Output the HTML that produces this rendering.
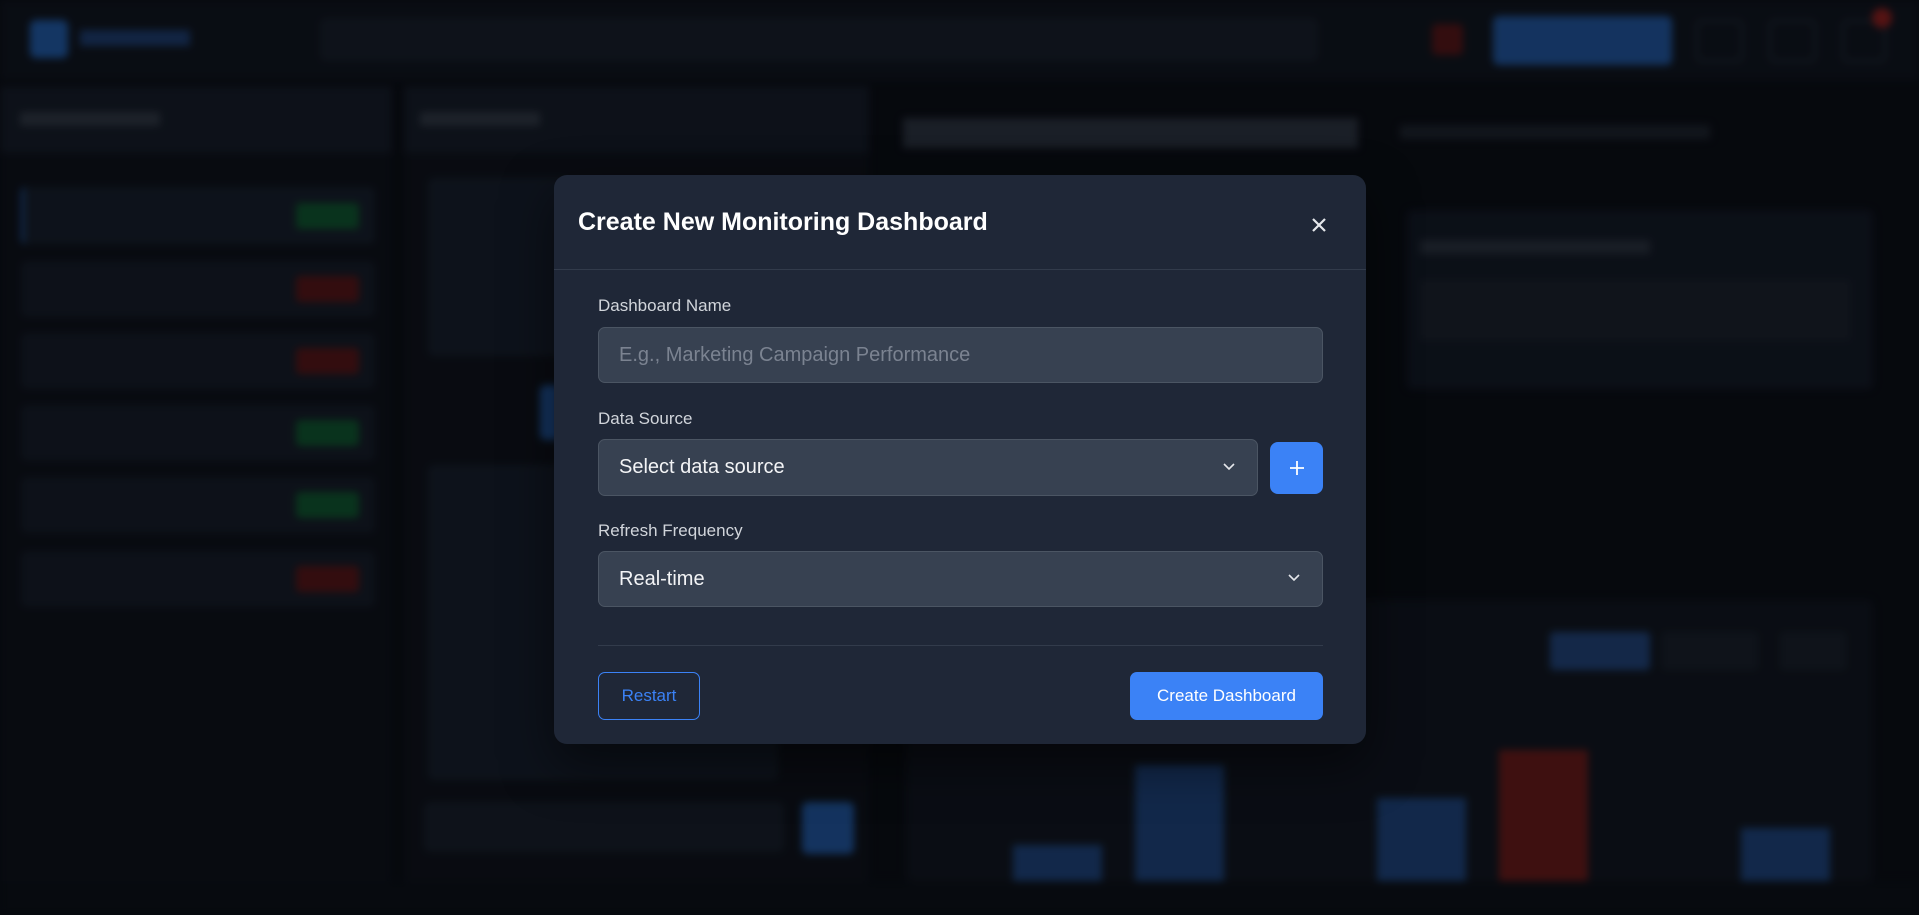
<!DOCTYPE html>
<html><head><meta charset="utf-8"><style>
*{box-sizing:border-box;margin:0;padding:0}
body{width:1919px;height:915px;overflow:hidden;background:#0a0d14;font-family:"Liberation Sans",sans-serif;position:relative}
.bg{position:absolute;inset:0;filter:blur(4px)}
.ov{position:absolute;inset:0;background:rgba(0,0,0,.3)}
.a{position:absolute}
.modal{position:absolute;left:554px;top:175px;width:812px;height:569px;background:#1f2737;border-radius:13px;box-shadow:0 20px 50px rgba(0,0,0,.5)}
.lbl{position:absolute;left:44px;color:#d1d5db;font-size:17px}
.field{position:absolute;left:44px;background:#374151;border:1px solid #4b5563;border-radius:7px;color:#f3f4f6;font-size:20px;padding-left:20px;display:flex;align-items:center}
.chev{position:absolute;top:50%;margin-top:-5px;width:12px;height:8px}
</style></head><body>
<div class="bg">
 <div class="a" style="left:0;top:0;width:1919px;height:80px;background:#0e131c"></div>
 <div class="a" style="left:30px;top:20px;width:38px;height:38px;background:#1d4e8f;border-radius:6px"></div>
 <div class="a" style="left:80px;top:30px;width:110px;height:16px;background:#1a3560"></div>
 <div class="a" style="left:320px;top:18px;width:998px;height:43px;background:#151b26;border-radius:6px"></div>
 <div class="a" style="left:1432px;top:24px;width:31px;height:31px;background:#4a1416;border-radius:5px"></div>
 <div class="a" style="left:1493px;top:16px;width:179px;height:49px;background:#1d4a88;border-radius:6px"></div>
 <div class="a" style="left:1696px;top:20px;width:47px;height:42px;border:2px solid #222a36;border-radius:6px"></div>
 <div class="a" style="left:1769px;top:20px;width:47px;height:42px;border:2px solid #222a36;border-radius:6px"></div>
 <div class="a" style="left:1842px;top:20px;width:44px;height:42px;border:2px solid #222a36;border-radius:6px"></div>
 <div class="a" style="left:1872px;top:8px;width:20px;height:20px;background:#7a1c1c;border-radius:50%"></div>
 <div class="a" style="left:0;top:86px;width:392px;height:67px;background:#131924"></div>
 <div class="a" style="left:20px;top:112px;width:140px;height:14px;background:#2a313c"></div>
 <div class="a" style="left:404px;top:86px;width:465px;height:67px;background:#131924"></div>
 <div class="a" style="left:420px;top:112px;width:120px;height:14px;background:#2a313c"></div>
 <div class="a" style="left:0;top:153px;width:392px;height:728px;background:#0c1018"></div>
 <div class="a" style="left:404px;top:153px;width:465px;height:728px;background:#0d1119"></div>
 <div class="a" style="left:21px;top:187px;width:354px;height:57px;background:#141b27;border-left:3px solid #1d4a88;border-radius:5px"></div>
 <div class="a" style="left:21px;top:261px;width:354px;height:56px;background:#131924;border-radius:5px"></div>
 <div class="a" style="left:21px;top:333px;width:354px;height:56px;background:#131924;border-radius:5px"></div>
 <div class="a" style="left:21px;top:405px;width:354px;height:56px;background:#131924;border-radius:5px"></div>
 <div class="a" style="left:21px;top:477px;width:354px;height:56px;background:#131924;border-radius:5px"></div>
 <div class="a" style="left:21px;top:551px;width:354px;height:56px;background:#131924;border-radius:5px"></div>
 <div class="a" style="left:296px;top:203px;width:63px;height:26px;background:#0e4a2a;border-radius:4px"></div>
 <div class="a" style="left:296px;top:276px;width:63px;height:26px;background:#4a1416;border-radius:4px"></div>
 <div class="a" style="left:296px;top:348px;width:63px;height:26px;background:#4a1416;border-radius:4px"></div>
 <div class="a" style="left:296px;top:420px;width:63px;height:26px;background:#0e4a2a;border-radius:4px"></div>
 <div class="a" style="left:296px;top:492px;width:63px;height:26px;background:#0e4a2a;border-radius:4px"></div>
 <div class="a" style="left:296px;top:566px;width:63px;height:26px;background:#4a1416;border-radius:4px"></div>
 <div class="a" style="left:428px;top:178px;width:140px;height:178px;background:#141b27;border-radius:6px"></div>
 <div class="a" style="left:428px;top:465px;width:350px;height:315px;background:#141b27;border-radius:6px"></div>
 <div class="a" style="left:540px;top:385px;width:20px;height:55px;background:#1d4a88;border-radius:6px"></div>
 <div class="a" style="left:424px;top:802px;width:360px;height:50px;background:#151b26;border-radius:6px"></div>
 <div class="a" style="left:802px;top:802px;width:52px;height:52px;background:#1d4a88;border-radius:6px"></div>
 <div class="a" style="left:903px;top:118px;width:455px;height:30px;background:#262d38"></div>
 <div class="a" style="left:1400px;top:125px;width:310px;height:14px;background:#1a2029"></div>
 <div class="a" style="left:1407px;top:210px;width:466px;height:179px;background:#111722;border-radius:6px"></div>
 <div class="a" style="left:1420px;top:240px;width:230px;height:14px;background:#242b36"></div>
 <div class="a" style="left:1420px;top:280px;width:430px;height:60px;background:#181e28"></div>
 <div class="a" style="left:906px;top:600px;width:967px;height:281px;background:#0f141d;border-radius:6px"></div>
 <div class="a" style="left:1550px;top:632px;width:100px;height:38px;background:#1d3a68;border-radius:4px"></div>
 <div class="a" style="left:1662px;top:632px;width:96px;height:38px;background:#161c26;border-radius:4px"></div>
 <div class="a" style="left:1780px;top:632px;width:66px;height:38px;background:#161c26;border-radius:4px"></div>
 <div class="a" style="left:1013px;top:845px;width:89px;height:36px;background:#1a3a6a"></div>
 <div class="a" style="left:1135px;top:765px;width:89px;height:116px;background:#1a3a6a"></div>
 <div class="a" style="left:1377px;top:798px;width:89px;height:83px;background:#1a3a6a"></div>
 <div class="a" style="left:1499px;top:750px;width:89px;height:131px;background:#5a1818"></div>
 <div class="a" style="left:1741px;top:828px;width:89px;height:53px;background:#1a3a6a"></div>
 <div class="a" style="left:0;top:881px;width:1919px;height:34px;background:#0b0f16"></div>
</div>
<div class="ov"></div>
<div class="modal">
 <div class="a" style="left:24px;top:33px;color:#fff;font-size:25px;font-weight:bold">Create New Monitoring Dashboard</div>
 <svg class="a" style="left:757px;top:42px" width="16" height="16" viewBox="0 0 16 16"><path d="M2 2L14 14M14 2L2 14" stroke="#e5e7eb" stroke-width="2.2"/></svg>
 <div class="a" style="left:0;top:94px;width:812px;height:1px;background:#323b4b"></div>
 <div class="lbl" style="top:121px">Dashboard Name</div>
 <div class="field" style="top:152px;width:725px;height:56px;color:#7b8391">E.g., Marketing Campaign Performance</div>
 <div class="lbl" style="top:234px">Data Source</div>
 <div class="field" style="top:264px;width:660px;height:57px">Select data source<svg class="chev" style="right:22px" viewBox="0 0 12 8"><path d="M1 1L6 6L11 1" stroke="#e5e7eb" stroke-width="1.6" fill="none"/></svg></div>
 <div class="a" style="left:716px;top:267px;width:53px;height:52px;background:#3b82f6;border-radius:8px"><svg class="a" style="left:19px;top:18px" width="16" height="16" viewBox="0 0 16 16"><path d="M8 1V15M1 8H15" stroke="#fff" stroke-width="1.8"/></svg></div>
 <div class="lbl" style="top:346px">Refresh Frequency</div>
 <div class="field" style="top:376px;width:725px;height:56px">Real-time<svg class="chev" style="right:22px" viewBox="0 0 12 8"><path d="M1 1L6 6L11 1" stroke="#e5e7eb" stroke-width="1.6" fill="none"/></svg></div>
 <div class="a" style="left:44px;top:470px;width:725px;height:1px;background:#323b4b"></div>
 <div class="a" style="left:44px;top:497px;width:102px;height:48px;border:1.5px solid #3b82f6;border-radius:7px;color:#3b82f6;font-size:17px;display:flex;align-items:center;justify-content:center">Restart</div>
 <div class="a" style="left:576px;top:497px;width:193px;height:48px;background:#3b82f6;border-radius:7px;color:#fff;font-size:17px;display:flex;align-items:center;justify-content:center">Create Dashboard</div>
</div>
</body></html>
